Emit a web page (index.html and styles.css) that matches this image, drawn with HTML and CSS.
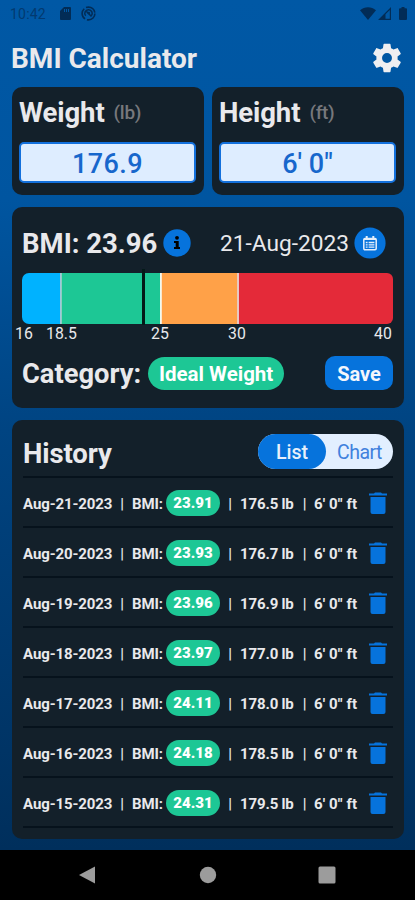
FILE: index.html
```html
<!DOCTYPE html>
<html lang="en">
<head>
    <meta charset="UTF-8">
    <meta name="viewport" content="width=device-width, initial-scale=1.0">
    <title>BMI Calculator</title>
    <link rel="stylesheet" href="styles.css">
</head>
<body>
    <div class="status-bar">
        <span class="clock">10:42</span>
        <svg class="sd-icon" width="11" height="13" viewBox="0 0 11 13"><path d="M4 0h6a1 1 0 0 1 1 1v11a1 1 0 0 1-1 1H1a1 1 0 0 1-1-1V4zM4 2v3h1V2zm2 0v3h1V2zm2 0v3h1V2z" fill-rule="evenodd"/></svg>
        <svg class="sync-icon" width="15" height="15" viewBox="0 0 15 15"><circle cx="7.5" cy="7.5" r="6.4" fill="none" stroke="#022c56" stroke-width="1.6" stroke-dasharray="11.4 2"/><path d="M4.700 9.800A3.600 3.600 0 0 1 7.500 3.800a3.600 3.600 0 0 1 2.800 6M5.500 5.500l5 5" fill="none" stroke="#022c56" stroke-width="1.5"/><circle cx="7.8" cy="7" r="1.3"/></svg>
        <span class="spacer"></span>
        <svg class="wifi-icon" width="16" height="13" viewBox="0 0 16 13"><path d="M0 3.2C4.7-.9 11.300-.9 16 3.200L8 13z"/></svg>
        <svg class="signal-icon" width="13" height="13" viewBox="0 0 13 13"><path d="M0 13L13 0v13zM7.500 7.300v4.500h4.300V3z" fill-rule="evenodd"/></svg>
        <svg width="8" height="13" viewBox="0 0 8 13"><path d="M2.500 0h3v1.300H7a1 1 0 0 1 1 1V12a1 1 0 0 1-1 1H1a1 1 0 0 1-1-1V2.300a1 1 0 0 1 1-1h1.500z"/></svg>
    </div>

    <div class="header">
        <h1>BMI Calculator</h1>
        <svg class="settings" width="34" height="34" viewBox="0 0 24 24"><path d="M19.430 12.980c.04-.32.07-.64.07-.98s-.03-.66-.07-.98l2.110-1.650c.19-.15.240-.42.120-.64l-2-3.460c-.12-.22-.39-.3-.61-.22l-2.490 1c-.52-.4-1.080-.73-1.690-.98l-.38-2.650A.488.488 0 0 0 14 2h-4c-.25 0-.46.180-.49.420l-.38 2.650c-.61.250-1.170.590-1.690.980l-2.490-1c-.23-.09-.49 0-.61.220l-2 3.460c-.13.220-.07.490.120.640l2.110 1.650c-.04.320-.07.650-.07.980s.03.660.07.980l-2.110 1.650c-.19.150-.24.420-.12.640l2 3.460c.12.220.39.300.61.220l2.490-1c.52.400 1.080.730 1.690.980l.38 2.650c.03.240.24.420.49.420h4c.25 0 .46-.18.490-.42l.38-2.650c.61-.25 1.170-.59 1.690-.98l2.490 1c.23.090.49 0 .61-.22l2-3.460c.12-.22.07-.49-.12-.64zM12 15.500a3.500 3.500 0 1 1 0-7 3.500 3.500 0 0 1 0 7z"/></svg>
    </div>

    <div class="inputs">
        <div class="card input-card">
            <div class="label"><span>Weight</span> <span class="unit">(lb)</span></div>
            <div class="field weight-field">176.9</div>
        </div>
        <div class="card input-card">
            <div class="label"><span>Height</span> <span class="unit">(ft)</span></div>
            <div class="field">6' 0"</div>
        </div>
    </div>

    <div class="card result">
        <div class="result-top">
            <span class="bmi">BMI: 23.96</span>
            <svg class="info" width="28" height="28" viewBox="0 0 28 28"><circle cx="14" cy="14" r="13.700" fill="#0673dc"/><circle cx="14" cy="8.800" r="1.900"/><path d="M11 12h4.700v6H17v2h-6v-2h1.700v-4H11z"/></svg>
            <span class="spacer"></span>
            <span class="date">21-Aug-2023</span>
            <svg class="calendar" width="32" height="32" viewBox="0 0 32 32"><circle cx="16" cy="16" r="15.600" fill="#0673dc"/><path d="M11 11.500h10a1.200 1.200 0 0 1 1.200 1.200v8.800a1.200 1.200 0 0 1-1.200 1.200H11a1.200 1.200 0 0 1-1.200-1.200v-8.800a1.200 1.200 0 0 1 1.200-1.200z" fill="none" stroke="#e4eefb" stroke-width="1.500"/><path d="M10 12h12M12.700 9v3.500M19.300 9v3.500" stroke="#e4eefb" stroke-width="2"/><path d="M11.800 15.500h1.800m1 0h5.800M11.800 17.800h1.800m1 0h5.800M11.800 20.100h1.800m1 0h5.800" stroke="#e4eefb" stroke-width="1.300"/></svg>
        </div>
        <div class="scale">
            <div class="under"></div>
            <div class="ideal"></div>
            <div class="over"></div>
            <div class="obese"></div>
            <span class="marker"></span>
        </div>
        <div class="ticks">
            <span>16</span><span>18.5</span><span>25</span><span>30</span><span>40</span>
        </div>
        <div class="category">
            <span class="category-label">Category:</span>
            <span class="category-value">Ideal Weight</span>
            <span class="spacer"></span>
            <span class="save">Save</span>
        </div>
    </div>

    <div class="card history">
        <div class="history-top">
            <h2>History</h2>
            <div class="toggle"><span class="active">List</span><span class="chart">Chart</span></div>
        </div>
        <div class="row">
            <span>Aug-21-2023</span><i>|</i><span class="tag">BMI:</span><b>23.91</b><i>|</i><span class="lb">176.5 lb</span><i>|</i><span class="ft">6' 0" ft</span>
            <svg class="trash" viewBox="0 0 18 22"><path d="M0 1.500h5L6 .5h6l1 1h5v2H0zM1.500 5h15v15a2 2 0 0 1-2 2h-11a2 2 0 0 1-2-2z"/></svg>
        </div>
        <div class="row">
            <span>Aug-20-2023</span><i>|</i><span class="tag">BMI:</span><b>23.93</b><i>|</i><span class="lb">176.7 lb</span><i>|</i><span class="ft">6' 0" ft</span>
            <svg class="trash" viewBox="0 0 18 22"><path d="M0 1.500h5L6 .5h6l1 1h5v2H0zM1.500 5h15v15a2 2 0 0 1-2 2h-11a2 2 0 0 1-2-2z"/></svg>
        </div>
        <div class="row">
            <span>Aug-19-2023</span><i>|</i><span class="tag">BMI:</span><b>23.96</b><i>|</i><span class="lb">176.9 lb</span><i>|</i><span class="ft">6' 0" ft</span>
            <svg class="trash" viewBox="0 0 18 22"><path d="M0 1.500h5L6 .5h6l1 1h5v2H0zM1.500 5h15v15a2 2 0 0 1-2 2h-11a2 2 0 0 1-2-2z"/></svg>
        </div>
        <div class="row">
            <span>Aug-18-2023</span><i>|</i><span class="tag">BMI:</span><b>23.97</b><i>|</i><span class="lb">177.0 lb</span><i>|</i><span class="ft">6' 0" ft</span>
            <svg class="trash" viewBox="0 0 18 22"><path d="M0 1.500h5L6 .5h6l1 1h5v2H0zM1.500 5h15v15a2 2 0 0 1-2 2h-11a2 2 0 0 1-2-2z"/></svg>
        </div>
        <div class="row">
            <span>Aug-17-2023</span><i>|</i><span class="tag">BMI:</span><b>24.11</b><i>|</i><span class="lb">178.0 lb</span><i>|</i><span class="ft">6' 0" ft</span>
            <svg class="trash" viewBox="0 0 18 22"><path d="M0 1.500h5L6 .5h6l1 1h5v2H0zM1.500 5h15v15a2 2 0 0 1-2 2h-11a2 2 0 0 1-2-2z"/></svg>
        </div>
        <div class="row">
            <span>Aug-16-2023</span><i>|</i><span class="tag">BMI:</span><b>24.18</b><i>|</i><span class="lb">178.5 lb</span><i>|</i><span class="ft">6' 0" ft</span>
            <svg class="trash" viewBox="0 0 18 22"><path d="M0 1.500h5L6 .5h6l1 1h5v2H0zM1.500 5h15v15a2 2 0 0 1-2 2h-11a2 2 0 0 1-2-2z"/></svg>
        </div>
        <div class="row">
            <span>Aug-15-2023</span><i>|</i><span class="tag">BMI:</span><b>24.31</b><i>|</i><span class="lb">179.5 lb</span><i>|</i><span class="ft">6' 0" ft</span>
            <svg class="trash" viewBox="0 0 18 22"><path d="M0 1.500h5L6 .5h6l1 1h5v2H0zM1.500 5h15v15a2 2 0 0 1-2 2h-11a2 2 0 0 1-2-2z"/></svg>
        </div>
    </div>

    <div class="nav-bar">
        <svg width="18" height="18" viewBox="0 0 18 18"><path d="M0 9L16 .5v17z"/></svg>
        <svg width="18" height="18" viewBox="0 0 18 18"><circle cx="9" cy="9" r="8.200"/></svg>
        <svg width="18" height="18" viewBox="0 0 18 18"><rect x=".5" y=".5" width="17" height="17" rx="1.500"/></svg>
    </div>
</body>
</html>
```

FILE: styles.css
```css
* {
    box-sizing: border-box;
}
body {
    margin: 0;
    height: 900px;
    display: flex;
    flex-direction: column;
    overflow: hidden;
    font-family: Roboto, sans-serif;
    color: #e9e9ec;
    background: linear-gradient(#0058a5 0, #0055a0 200px, #004482 430px, #002f5c 850px);
}
h1, h2 {
    margin: 0;
}
.spacer {
    flex: 1;
}
.status-bar {
    display: flex;
    align-items: center;
    height: 27px;
    padding: 0 8px 0 10px;
    fill: #022c56;
}
.clock {
    width: 50px;
    font-size: 14px;
    color: #023a70;
    letter-spacing: 0.2px;
}
.sd-icon {
    margin-right: 10px;
}
.wifi-icon {
    margin-right: 2px;
}
.signal-icon {
    margin-right: 8px;
}
.header {
    display: flex;
    align-items: center;
    justify-content: space-between;
    height: 60px;
    padding: 2px 11px 0 11px;
}
h1 {
    padding-top: 2px;
    font-size: 28px;
    line-height: 32px;
    font-weight: 700;
}
.settings {
    fill: #efeff1;
}
.card {
    background: #13202a;
    border-radius: 10px;
}
.inputs {
    display: flex;
    gap: 8px;
    margin: 0 11px 12px 12px;
}
.input-card {
    flex: 1;
    height: 108px;
    padding: 8px 8px 0 7px;
}
.label {
    display: flex;
    align-items: center;
    height: 34px;
    margin-bottom: 13px;
    font-size: 27.5px;
    font-weight: 700;
    letter-spacing: -0.1px;
}
.unit {
    margin-left: 9px;
    font-size: 19px;
    font-weight: 500;
    color: #77787c;
    letter-spacing: -0.3px;
}
.field {
    height: 41px;
    border: 2px solid #1370dc;
    border-radius: 5px;
    background: #deedff;
    color: #1767cc;
    font-size: 27px;
    font-weight: 500;
    line-height: 41px;
    text-align: center;
}
.weight-field {
    letter-spacing: 0.4px;
}
.result {
    height: 201px;
    margin: 0 11px 12px 12px;
    padding: 18px 11px 0 10px;
}
.result-top {
    display: flex;
    align-items: center;
    height: 35px;
    margin-bottom: 13px;
    padding-right: 7px;
}
.bmi {
    padding-top: 1px;
    font-size: 27.5px;
    font-weight: 700;
    margin-right: 6px;
}
.date {
    padding-top: 1px;
    font-size: 22.7px;
    margin-right: 5px;
}
.scale {
    position: relative;
    display: flex;
    height: 51px;
}
.under {
    width: 39px;
    background: #00b2ff;
    border-radius: 7px 0 0 7px;
    border-right: 1px solid #9cc9dc;
}
.ideal {
    width: 100px;
    background: #1dc795;
    border-left: 1px solid #8fccc0;
    border-right: 1px solid #eefaf2;
}
.over {
    width: 78px;
    background: #ffa148;
    border-left: 1px solid #fbe6cd;
    border-right: 2px solid #e8c9c2;
}
.obese {
    flex: 1;
    background: #e42a39;
    border-radius: 0 6px 6px 0;
}
.marker {
    position: absolute;
    left: 120px;
    top: -4px;
    width: 3px;
    height: 56px;
    background: #031a18;
}
.ticks {
    display: grid;
    grid-template-columns: 31px 105px 77px 146px 20px;
    height: 18px;
    margin-left: -7px;
    font-size: 15.8px;
    line-height: 19px;
}
.category {
    display: flex;
    align-items: center;
    height: 34px;
    margin-top: 14px;
}
.category-label {
    padding-top: 2px;
    font-size: 27.3px;
    font-weight: 700;
    margin-right: 7px;
}
.category-value {
    height: 33px;
    width: 136px;
    border-radius: 17px;
    background: #1dc795;
    color: #fff;
    font-size: 20.5px;
    font-weight: 700;
    line-height: 34px;
    text-align: center;
}
.save {
    width: 68px;
    height: 34px;
    border-radius: 10px;
    background: #0673dc;
    color: #f4f6fc;
    font-size: 20px;
    font-weight: 700;
    line-height: 36px;
    text-align: center;
}
.history {
    height: 419px;
    margin: 0 11px 11px 12px;
    padding: 14px 11px 0 11px;
}
.history-top {
    display: flex;
    justify-content: space-between;
    height: 44px;
    border-bottom: 2px solid #06121c;
}
h2 {
    font-size: 27.5px;
    line-height: 39px;
    letter-spacing: -0.1px;
}
.toggle {
    display: flex;
    width: 135px;
    height: 35px;
    border-radius: 18px;
    background: #e2efff;
    font-size: 19.5px;
    line-height: 37px;
    text-align: center;
}
.active {
    width: 68px;
    border-radius: 18px;
    background: #0673dc;
    color: #e8f0fb;
    font-weight: 500;
}
.chart {
    flex: 1;
    color: #4081dd;
    letter-spacing: -0.5px;
}
.row {
    display: grid;
    grid-template-columns: 89px 20px 34px 54px 20px 55px 19px 55px 18px;
    align-items: center;
    height: 50px;
    padding-top: 2px;
    border-bottom: 2px solid #06121c;
    font-size: 15px;
    font-weight: 700;
    letter-spacing: -0.1px;
    white-space: nowrap;
}
.row span, .row i {
    padding-top: 1px;
}
.row i {
    font-style: normal;
    font-weight: 500;
    text-align: center;
}
.row b {
    height: 26px;
    border-radius: 13px;
    background: #1dc795;
    color: #fff;
    font-size: 15px;
    line-height: 27px;
    letter-spacing: 0;
    text-align: center;
}
.lb {
    word-spacing: -0.5px;
}
.ft {
    letter-spacing: 0.1px;
}
.trash {
    width: 18px;
    height: 22px;
    fill: #0673dc;
}
.nav-bar {
    display: flex;
    align-items: center;
    justify-content: space-between;
    height: 50px;
    padding: 0 79px;
    background: #000;
    fill: #9c9c9c;
}
```
